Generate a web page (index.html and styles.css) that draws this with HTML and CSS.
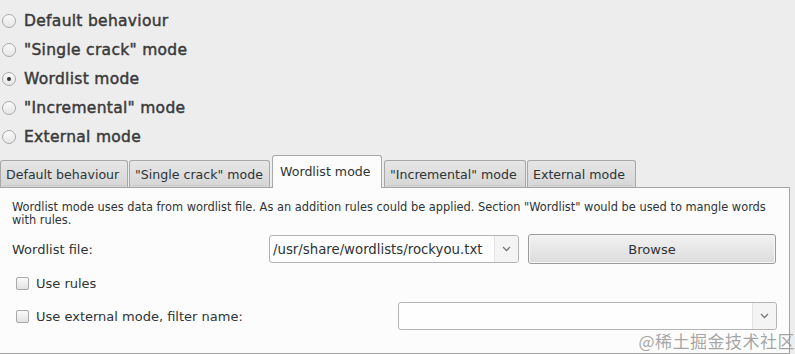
FILE: index.html
```html
<!DOCTYPE html>
<html>
<head>
<meta charset="utf-8">
<link rel="stylesheet" href="styles.css">
</head>
<body>
<div class="page">
  <div class="modes">
    <label class="radio"><span class="dot"></span>Default behaviour</label>
    <label class="radio"><span class="dot"></span>"Single crack" mode</label>
    <label class="radio"><span class="dot on"></span>Wordlist mode</label>
    <label class="radio"><span class="dot"></span>"Incremental" mode</label>
    <label class="radio"><span class="dot"></span>External mode</label>
  </div>
  <div class="tabs">
    <div class="tab t1">Default behaviour</div>
    <div class="tab t2">"Single crack" mode</div>
    <div class="tab active t3">Wordlist mode</div>
    <div class="tab t4">"Incremental" mode</div>
    <div class="tab t5">External mode</div>
  </div>
  <div class="panel">
    <p class="desc">Wordlist mode uses data from wordlist file. As an addition rules could be applied. Section "Wordlist" would be used to mangle words with rules.</p>
    <div class="row file-row">
      <span class="label">Wordlist file:</span>
      <div class="combo file-combo"><span class="val">/usr/share/wordlists/rockyou.txt</span><span class="arrow"><svg width="9" height="6" viewBox="0 0 9 6"><path d="M1 1 L4.5 4.5 L8 1" fill="none" stroke="#777" stroke-width="1.3"/></svg></span></div>
      <div class="btn">Browse</div>
    </div>
    <div class="row check-row">
      <span class="box"></span><span class="label">Use rules</span>
    </div>
    <div class="row ext-row">
      <div class="check-row"><span class="box"></span><span class="label">Use external mode, filter name:</span></div>
      <div class="combo ext-combo"><span class="val"></span><span class="arrow"><svg width="9" height="6" viewBox="0 0 9 6"><path d="M1 1 L4.5 4.5 L8 1" fill="none" stroke="#777" stroke-width="1.3"/></svg></span></div>
    </div>
  </div>
  <div class="watermark">@稀土掘金技术社区</div>
</div>
</body>
</html>
```
FILE: styles.css
```css
* { box-sizing: border-box; }
html, body { margin: 0; padding: 0; }
body {
  width: 795px;
  height: 354px;
  overflow: hidden;
  background: #ededed;
  font-family: "DejaVu Sans", sans-serif;
  color: #2e3436;
}
.page { position: relative; width: 795px; height: 354px; overflow: hidden; }
.modes {
  display: flex;
  flex-direction: column;
  padding-top: 6px;
}
.radio {
  display: flex;
  align-items: center;
  height: 29px;
  font-size: 15.5px;
  font-weight: normal;
  -webkit-text-stroke: 0.45px #3a3a3a;
  color: #3a3a3a;
  letter-spacing: 0.3px;
  white-space: nowrap;
}
.dot {
  width: 14px;
  height: 14px;
  border-radius: 50%;
  border: 1px solid #a9a9a9;
  background: linear-gradient(#fafafa, #e6e6e6);
  margin: 0 8px 0 2px;
  display: flex;
  align-items: center;
  justify-content: center;
  -webkit-text-stroke: 0;
}
.dot.on::after {
  content: "";
  width: 4px;
  height: 4px;
  border-radius: 50%;
  background: #333;
}
.tabs {
  display: flex;
  align-items: flex-end;
  height: 32px;
  margin-top: 4px;
  gap: 1px;
}
.tab {
  position: relative;
  height: 27px;
  padding: 0 5px;
  display: flex;
  align-items: center;
  white-space: nowrap;
  font-size: 12.6px;
  color: #2e3436;
  background: linear-gradient(#e6e6e6, #d6d6d6);
  border: 1px solid #a8a8a8;
  border-bottom: none;
  border-radius: 3px 3px 0 0;
}
.tab::after {
  content: "";
  position: absolute;
  left: 3px;
  right: 3px;
  bottom: 1px;
  border-bottom: 1px dotted #c2c2c2;
}
.tab.t1 { width: 128px; }
.tab.t2 { width: 141px; }
.tab.t3 { width: 110px; margin: 0 1px; padding-left: 7px; }
.tab.t4 { width: 142px; }
.tab.t5 { width: 109px; }
.tab.active {
  height: 33px;
  background: #fcfcfc;
  z-index: 2;
  margin-bottom: -1px;
  padding-bottom: 2px;
}
.tab.active::after { display: none; }
.panel {
  width: 790px;
  height: 167px;
  background: #fcfcfc;
  border: 1px solid #a4a4a4;
  border-left: none;
  padding: 13px 12px 0 12px;
}
.desc {
  margin: 0;
  width: 760px;
  font-size: 11.4px;
  line-height: 13px;
  color: #2e3436;
}
.row { display: flex; align-items: center; }
.label { font-size: 13px; color: #2e3436; white-space: nowrap; }
.file-row { margin-top: 7px; height: 30px; }
.file-row .label { width: 257px; }
.combo {
  display: flex;
  align-items: stretch;
  height: 28px;
  border: 1px solid #b4b4b4;
  border-radius: 3px;
  background: #fefefe;
}
.combo .val {
  flex: 1;
  display: flex;
  align-items: center;
  padding-left: 3px;
  font-size: 13.3px;
  white-space: nowrap;
}
.combo .arrow {
  width: 24px;
  display: flex;
  align-items: center;
  justify-content: center;
  background: #f4f4f4;
  border-left: 1px solid #e4e4e4;
  border-radius: 0 3px 3px 0;
}
.file-combo { width: 250px; }
.btn {
  width: 248px;
  height: 30px;
  margin-left: 9px;
  border: 1px solid #9a9a9a;
  border-radius: 3px;
  background: linear-gradient(#f2f2f2, #dcdcdc);
  box-shadow: inset 0 0 0 1px #f8f8f8;
  display: flex;
  align-items: center;
  justify-content: center;
  font-size: 13px;
  color: #2e3436;
}
.check-row { display: flex; align-items: center; }
.row.check-row { margin-top: 4px; height: 30px; }
.box {
  width: 13px;
  height: 13px;
  margin: 0 7px 0 4px;
  border: 1px solid #a8a8a8;
  border-radius: 2px;
  background: linear-gradient(#fafafa, #e2e2e2);
}
.ext-row { margin-top: 3px; height: 30px; }
.ext-row .check-row { width: 386px; }
.ext-combo { width: 379px; height: 28px; }
.watermark {
  position: absolute;
  right: 0;
  bottom: 1px;
  font-family: "Noto Sans CJK SC", sans-serif;
  font-size: 17px;
  color: rgba(150, 150, 150, 0.85);
  letter-spacing: 0.5px;
}
```
